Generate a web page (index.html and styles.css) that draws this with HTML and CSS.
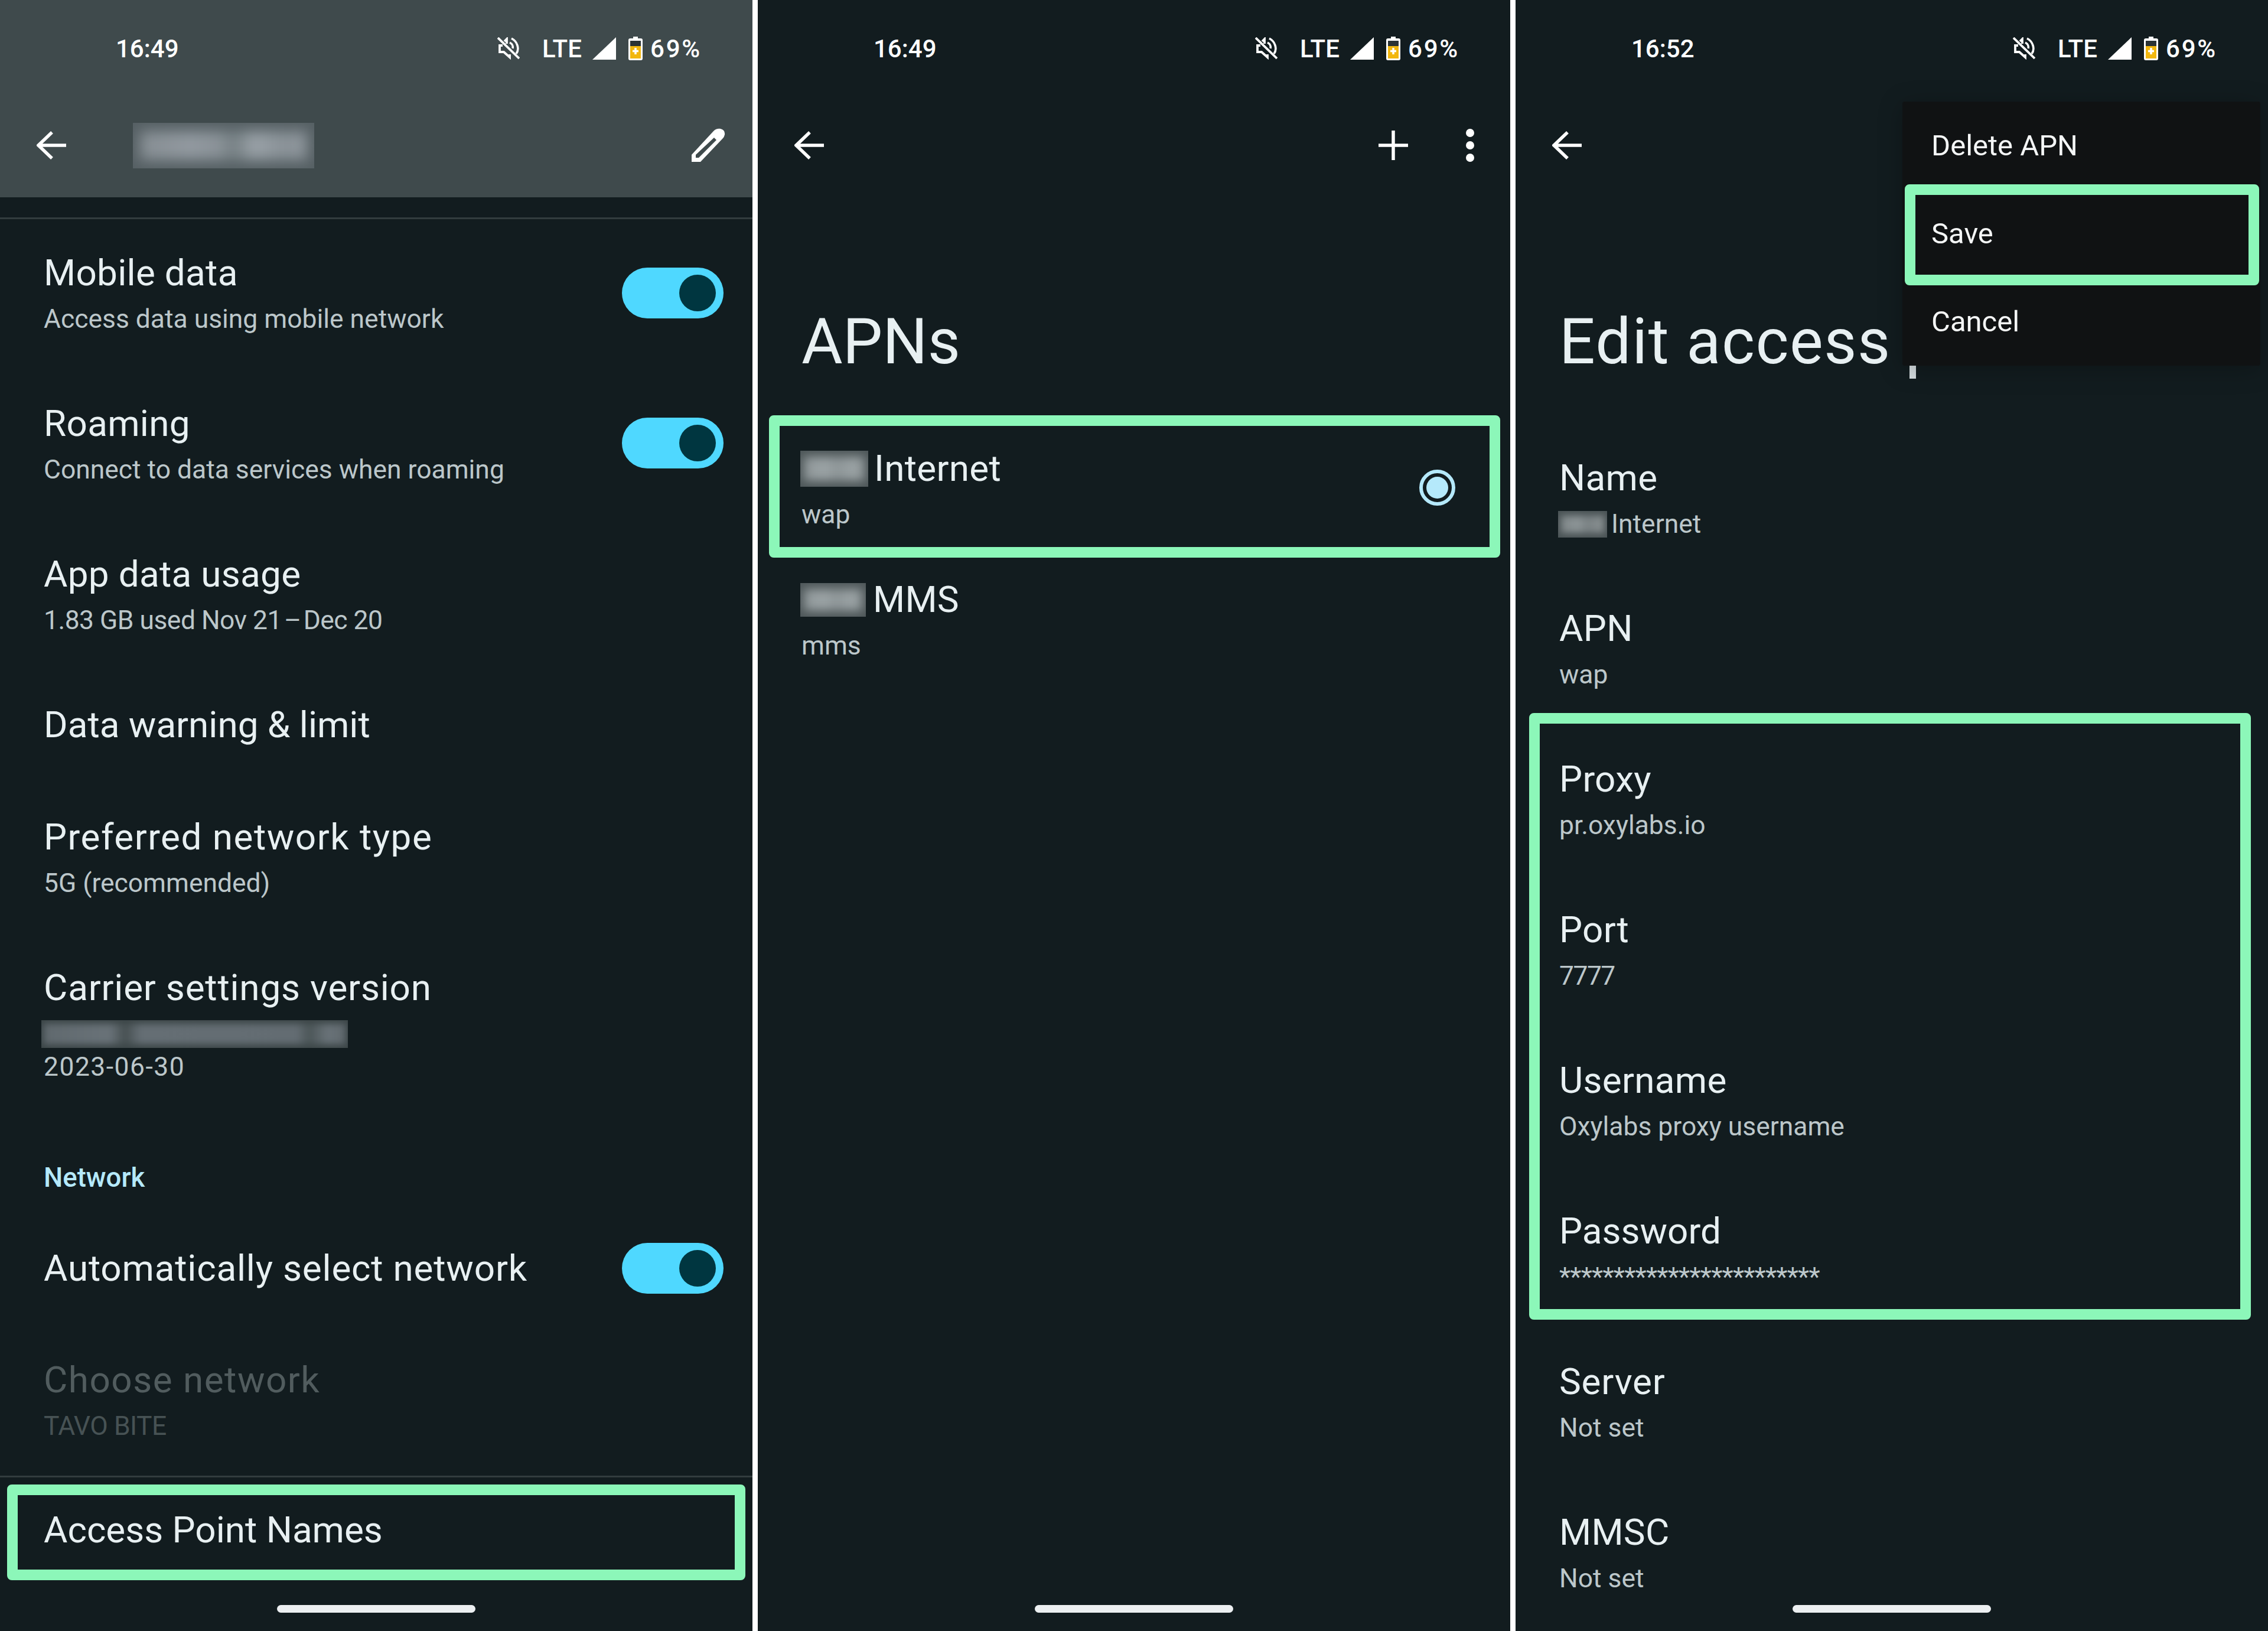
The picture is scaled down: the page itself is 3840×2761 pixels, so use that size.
FILE: index.html
```html
<!DOCTYPE html>
<html lang="en">
<head>
  <meta charset="UTF-8" />
  <title>APN settings</title>
  <link rel="stylesheet" href="styles.css">
</head>
<body>
  <svg class="sprite" xmlns="http://www.w3.org/2000/svg">
    <symbol id="i-back" viewBox="0 0 50 50">
      <path d="M26 3 L3 25 L26 47 M3 25 H50" fill="none" stroke="#fff" stroke-width="5.5"/>
    </symbol>
    <symbol id="i-mute" viewBox="12 10 38 38">
      <path d="M13 11 L49 46" fill="none" stroke="#fff" stroke-width="3.8"/>
      <path d="M21 24 H16 V35 H23 L33 44 V39 M28 21 V13 L24 17" fill="none" stroke="#fff" stroke-width="3.8"/>
      <path d="M36 12 C46 17 50 30 44 38 M33 19 C37 21 39 25 38 29" fill="none" stroke="#fff" stroke-width="3.6"/>
    </symbol>
    <symbol id="i-signal" viewBox="0 0 40 38">
      <path d="M0 38 L40 0 V38 Z" fill="#fff"/>
    </symbol>
    <symbol id="i-battery" viewBox="0 0 24 40">
      <path d="M8 0 H16 V3 H21 Q24 3 24 6 V37 Q24 40 21 40 H3 Q0 40 0 37 V6 Q0 3 3 3 H8 Z" fill="#fff"/>
      <rect x="3" y="7" width="18" height="9" fill="#2b3335"/>
      <rect x="3" y="16" width="18" height="21" fill="#f2b70f"/>
      <path d="M12 19 V30 M7 24.5 H17" stroke="#fff" stroke-width="3.5"/>
    </symbol>
  </svg>

  <section class="panel">
    <div class="top-tint">
      <div class="status">
        <span class="clock">16:49</span>
        <div class="status-right">
          <svg class="ic-mute"><use href="#i-mute"/></svg>
          <span class="lte">LTE</span>
          <svg class="ic-signal"><use href="#i-signal"/></svg>
          <svg class="ic-battery"><use href="#i-battery"/></svg>
          <span class="pct">69%</span>
        </div>
      </div>
      <div class="nav">
        <svg class="ic-back"><use href="#i-back"/></svg>
        <div class="redact redact-header"></div>
        <svg class="ic-pencil" viewBox="20 15 60 62">
          <path fill-rule="evenodd" d="M21 62 L58 22 Q63 17 70 18 Q78 20 77 28 Q76 32 74 34 L36 74 H21 Z M28 62 V67 H33 L63 37 L59 33 Z" fill="#fff"/>
        </svg>
      </div>
    </div>

    <div class="network-list">
      <div class="row row-first">
        <div class="row-text">
          <div class="row-title">Mobile data</div>
          <div class="row-sub">Access data using mobile network</div>
        </div>
        <div class="toggle"></div>
      </div>
      <div class="row">
        <div class="row-text">
          <div class="row-title">Roaming</div>
          <div class="row-sub">Connect to data services when roaming</div>
        </div>
        <div class="toggle"></div>
      </div>
      <div class="row">
        <div class="row-text">
          <div class="row-title">App data usage</div>
          <div class="row-sub sub-narrow">1.83 GB used Nov 21&#8202;–&#8202;Dec 20</div>
        </div>
      </div>
      <div class="row row-single">
        <div class="row-text">
          <div class="row-title title-tight">Data warning &amp; limit</div>
        </div>
      </div>
      <div class="row">
        <div class="row-text">
          <div class="row-title title-wider">Preferred network type</div>
          <div class="row-sub">5G (recommended)</div>
        </div>
      </div>
      <div class="row row-auto">
        <div class="row-text">
          <div class="row-title title-wide">Carrier settings version</div>
          <div class="redact redact-carrier"></div>
          <div class="row-sub row-sub-date">2023-06-30</div>
        </div>
      </div>
      <div class="section-label">Network</div>
      <div class="row row-single row-auto-select">
        <div class="row-text">
          <div class="row-title title-wide">Automatically select network</div>
        </div>
        <div class="toggle"></div>
      </div>
      <div class="row row-disabled row-choose">
        <div class="row-text">
          <div class="row-title title-wider">Choose network</div>
          <div class="row-sub sub-narrow">TAVO BITE</div>
        </div>
      </div>
      <div class="row row-auto row-divided">
        <div class="row-text">
          <div class="row-title title-tight">Access Point Names</div>
        </div>
      </div>
    </div>
    <div class="mark mark-access"></div>
    <div class="home-bar"></div>
  </section>

  <section class="panel">
    <div class="status">
      <span class="clock">16:49</span>
      <div class="status-right">
        <svg class="ic-mute"><use href="#i-mute"/></svg>
        <span class="lte">LTE</span>
        <svg class="ic-signal"><use href="#i-signal"/></svg>
        <svg class="ic-battery"><use href="#i-battery"/></svg>
        <span class="pct">69%</span>
      </div>
    </div>
    <div class="nav">
      <svg class="ic-back"><use href="#i-back"/></svg>
      <svg class="ic-plus" viewBox="0 0 50 50">
        <path d="M25 0 V50 M0 25 H50" fill="none" stroke="#fff" stroke-width="5.5"/>
      </svg>
      <div class="dots"><span></span><span></span><span></span></div>
    </div>
    <h1 class="page-title">APNs</h1>
    <div class="apn-list">
      <div class="apn-row">
        <div>
          <div class="row-title apn-title"><div class="redact redact-apn"></div>Internet</div>
          <div class="row-sub">wap</div>
        </div>
        <div class="radio"></div>
      </div>
      <div class="apn-row">
        <div>
          <div class="row-title apn-title"><div class="redact redact-apn redact-mms"></div>MMS</div>
          <div class="row-sub">mms</div>
        </div>
      </div>
    </div>
    <div class="mark mark-apn"></div>
    <div class="home-bar"></div>
  </section>

  <section class="panel">
    <div class="status">
      <span class="clock">16:52</span>
      <div class="status-right">
        <svg class="ic-mute"><use href="#i-mute"/></svg>
        <span class="lte">LTE</span>
        <svg class="ic-signal"><use href="#i-signal"/></svg>
        <svg class="ic-battery"><use href="#i-battery"/></svg>
        <span class="pct">69%</span>
      </div>
    </div>
    <div class="nav">
      <svg class="ic-back"><use href="#i-back"/></svg>
    </div>
    <h1 class="page-title page-title-edit">Edit access</h1>
    <div class="edit-list">
      <div class="row">
        <div class="row-text">
          <div class="row-title">Name</div>
          <div class="row-sub name-sub"><div class="redact redact-name"></div>Internet</div>
        </div>
      </div>
      <div class="row">
        <div class="row-text">
          <div class="row-title">APN</div>
          <div class="row-sub">wap</div>
        </div>
      </div>
      <div class="row">
        <div class="row-text">
          <div class="row-title">Proxy</div>
          <div class="row-sub">pr.oxylabs.io</div>
        </div>
      </div>
      <div class="row">
        <div class="row-text">
          <div class="row-title">Port</div>
          <div class="row-sub sub-port">7777</div>
        </div>
      </div>
      <div class="row">
        <div class="row-text">
          <div class="row-title">Username</div>
          <div class="row-sub">Oxylabs proxy username</div>
        </div>
      </div>
      <div class="row">
        <div class="row-text">
          <div class="row-title title-tight">Password</div>
          <div class="row-sub stars">************************</div>
        </div>
      </div>
      <div class="row">
        <div class="row-text">
          <div class="row-title title-wide">Server</div>
          <div class="row-sub">Not set</div>
        </div>
      </div>
      <div class="row">
        <div class="row-text">
          <div class="row-title">MMSC</div>
          <div class="row-sub">Not set</div>
        </div>
      </div>
    </div>
    <div class="mark mark-fields"></div>
    <div class="title-stub"></div>
    <div class="menu">
      <div class="menu-item">Delete APN</div>
      <div class="menu-item">Save</div>
      <div class="menu-item">Cancel</div>
      <div class="mark mark-save"></div>
    </div>
    <div class="home-bar"></div>
  </section>
</body>
</html>
```

FILE: styles.css
```css
*, *::before, *::after {
  box-sizing: border-box;
}

body {
  margin: 0;
  width: 3840px;
  height: 2761px;
  background-color: #ffffff;
  display: flex;
  gap: 9px;
  font-family: Roboto, "Liberation Sans", sans-serif;
  overflow: hidden;
}

.sprite {
  display: none;
}

.panel {
  position: relative;
  width: 1274px;
  height: 2761px;
  overflow: hidden;
  background-color: #121c1f;
  color: #e8f0f2;
}

.top-tint {
  background-color: #3f4a4c;
  height: 334px;
}

/* status bar */
.status {
  display: flex;
  align-items: center;
  height: 164px;
  padding: 0 88px 0 196px;
  color: #ffffff;
  font-size: 42px;
  font-weight: 500;
}

.status-right {
  display: flex;
  align-items: center;
  margin-left: auto;
}

.status-right svg {
  display: block;
}

.ic-mute {
  width: 38px;
  height: 38px;
  margin-right: 38px;
}

.lte {
  width: 71px;
  margin-right: 14px;
}

.ic-signal {
  width: 40px;
  height: 38px;
  margin-right: 21px;
}

.ic-battery {
  width: 24px;
  height: 40px;
  margin-right: 13px;
}

.pct {
  width: 85px;
  letter-spacing: 2.8px;
}

/* app bar */
.nav {
  display: flex;
  align-items: center;
  height: 164px;
  padding: 0 44px 0 62px;
}

.ic-back {
  width: 50px;
  height: 50px;
  flex-shrink: 0;
}

.ic-pencil {
  width: 60px;
  height: 62px;
  margin-left: auto;
}

.ic-plus {
  width: 50px;
  height: 50px;
  margin-left: auto;
}

.dots {
  display: flex;
  flex-direction: column;
  gap: 7px;
  margin-left: 98px;
  margin-right: 17px;
}

.dots span {
  width: 14px;
  height: 14px;
  border-radius: 50%;
  background-color: #ffffff;
}

/* blurred out text */
.redact {
  position: relative;
  overflow: hidden;
  flex-shrink: 0;
}

.redact::before {
  content: "";
  position: absolute;
  filter: blur(11px);
}

.redact-header {
  width: 307px;
  height: 77px;
  margin-left: 113px;
  background-color: #566064;
}

.redact-header::before {
  inset: 14px 12px;
  background: linear-gradient(90deg, #868e93 0%, #9299a0 30%, #8a9298 48%, #747e82 56%, #9aa2a8 68%, #8a9298 85%, #8e969c 100%);
}

.redact-carrier {
  width: 519px;
  height: 47px;
  margin: 23px 0 2px -4px;
  background-color: #3b4547;
}

.redact-carrier::before {
  inset: 6px 4px;
  filter: blur(6px);
  background: linear-gradient(90deg, #60696e 0%, #697278 22%, #464f51 27%, #656e74 32%, #636c72 84%, #4b5557 88%, #697278 94%, #60696e 100%);
}

.redact-apn {
  width: 115px;
  height: 61px;
  margin: 0 10px 0 -2px;
  background-color: #4e5759;
}

.redact-apn::before {
  inset: 10px 6px;
  filter: blur(8px);
  background: linear-gradient(90deg, #8e9698 0%, #9ba3a5 35%, #8d9597 55%, #9aa2a4 80%, #8e9698 100%);
}

.redact-mms {
  width: 111px;
  height: 57px;
  margin-right: 12px;
}

.redact-name {
  width: 83px;
  height: 45px;
  margin: 0 7px 0 -2px;
  background-color: #4a5355;
}

.redact-name::before {
  inset: 8px 5px;
  filter: blur(6px);
  background: linear-gradient(90deg, #7f8789 0%, #8c9496 40%, #7a8284 60%, #888f91 100%);
}

/* settings rows */
.network-list {
  margin-top: 34px;
}

.row {
  display: flex;
  align-items: center;
  justify-content: space-between;
  height: 255px;
  padding: 0 49px 0 74px;
}

.row-text {
  align-self: flex-start;
  padding-top: 63px;
}

.row-title {
  font-size: 62px;
  line-height: 64px;
  letter-spacing: 0.3px;
  color: #e8f0f2;
  white-space: nowrap;
}

.title-tight {
  letter-spacing: 0;
}

.title-wide {
  letter-spacing: 0.8px;
}

.title-wider {
  letter-spacing: 1.5px;
}

.row-sub {
  margin-top: 16px;
  font-size: 44.4px;
  line-height: 60px;
  color: #bcc7ca;
  white-space: nowrap;
}

.sub-narrow {
  letter-spacing: -0.5px;
}

.row-sub-date {
  margin-top: 0;
  letter-spacing: 1.5px;
}

.sub-port {
  letter-spacing: -1.5px;
}

.row-first {
  height: 254px;
  border-top: 3px solid #323c3e;
}

.row-first .row-text {
  padding-top: 59px;
}

.row-first .toggle {
  margin-top: -2px;
}

.row-single {
  height: 190px;
}

.row-auto {
  height: auto;
}

.row-auto-select {
  height: 189px;
}

.row-choose {
  height: 257px;
}

.row-disabled .row-title {
  color: #515c5e;
}

.row-disabled .row-sub {
  color: #475254;
}

.row-divided {
  border-top: 3px solid #323c3e;
}

.row-divided .row-text {
  padding-top: 57px;
}

.section-label {
  padding: 128px 74px 28px;
  font-size: 45.5px;
  font-weight: 500;
  line-height: 60px;
  color: #b5e9fb;
}

.toggle {
  position: relative;
  width: 172px;
  height: 86px;
  border-radius: 43px;
  background-color: #4fd8ff;
}

.toggle::after {
  content: "";
  position: absolute;
  top: 12px;
  right: 13px;
  width: 62px;
  height: 62px;
  border-radius: 50%;
  background-color: #003640;
}

/* APN pages */
.page-title {
  margin: 191px 0 0;
  padding-left: 74px;
  font-size: 107px;
  font-weight: 400;
  line-height: 120px;
  color: #e8f0f2;
  white-space: nowrap;
}

.page-title-edit {
  letter-spacing: 1.5px;
}

.apn-list {
  margin-top: 64px;
}

.apn-row {
  display: flex;
  justify-content: space-between;
  height: 222px;
  padding: 58px 93px 0 74px;
}

.apn-title {
  display: flex;
  align-items: center;
}

.radio {
  width: 61px;
  height: 61px;
  margin-top: 34px;
  border: 6px solid #b5e9fb;
  border-radius: 50%;
  padding: 6px;
  background-color: #b5e9fb;
  background-clip: content-box;
}

.edit-list {
  margin-top: 75px;
}

.name-sub {
  display: flex;
  align-items: center;
}

.stars {
  letter-spacing: -0.75px;
}

/* highlight boxes drawn over the screenshots */
.mark {
  position: absolute;
  border: 18px solid #8cf7b9;
  border-radius: 8px;
}

.mark-access {
  left: 12px;
  top: 2513px;
  width: 1250px;
  height: 162px;
}

.mark-apn {
  left: 19px;
  top: 703px;
  width: 1238px;
  height: 241px;
}

.mark-fields {
  left: 23px;
  top: 1207px;
  width: 1222px;
  height: 1027px;
}

.mark-save {
  left: 4px;
  top: 140px;
  width: 600px;
  height: 171px;
}

/* descender of the title word hidden behind the menu */
.title-stub {
  position: absolute;
  left: 667px;
  top: 610px;
  width: 11px;
  height: 31px;
  background-color: #d5dde0;
}

.menu {
  position: absolute;
  left: 655px;
  top: 172px;
  width: 606px;
  height: 447px;
  border-radius: 4px;
  background-color: #101213;
  box-shadow: 0 6px 40px rgba(0, 0, 0, 0.25);
}

.menu-item {
  display: flex;
  align-items: center;
  height: 149px;
  padding-left: 49px;
  font-size: 49px;
  color: #f4f6f6;
}

.home-bar {
  position: absolute;
  left: 469px;
  bottom: 31px;
  width: 336px;
  height: 13px;
  border-radius: 7px;
  background-color: #eceff1;
}
```
